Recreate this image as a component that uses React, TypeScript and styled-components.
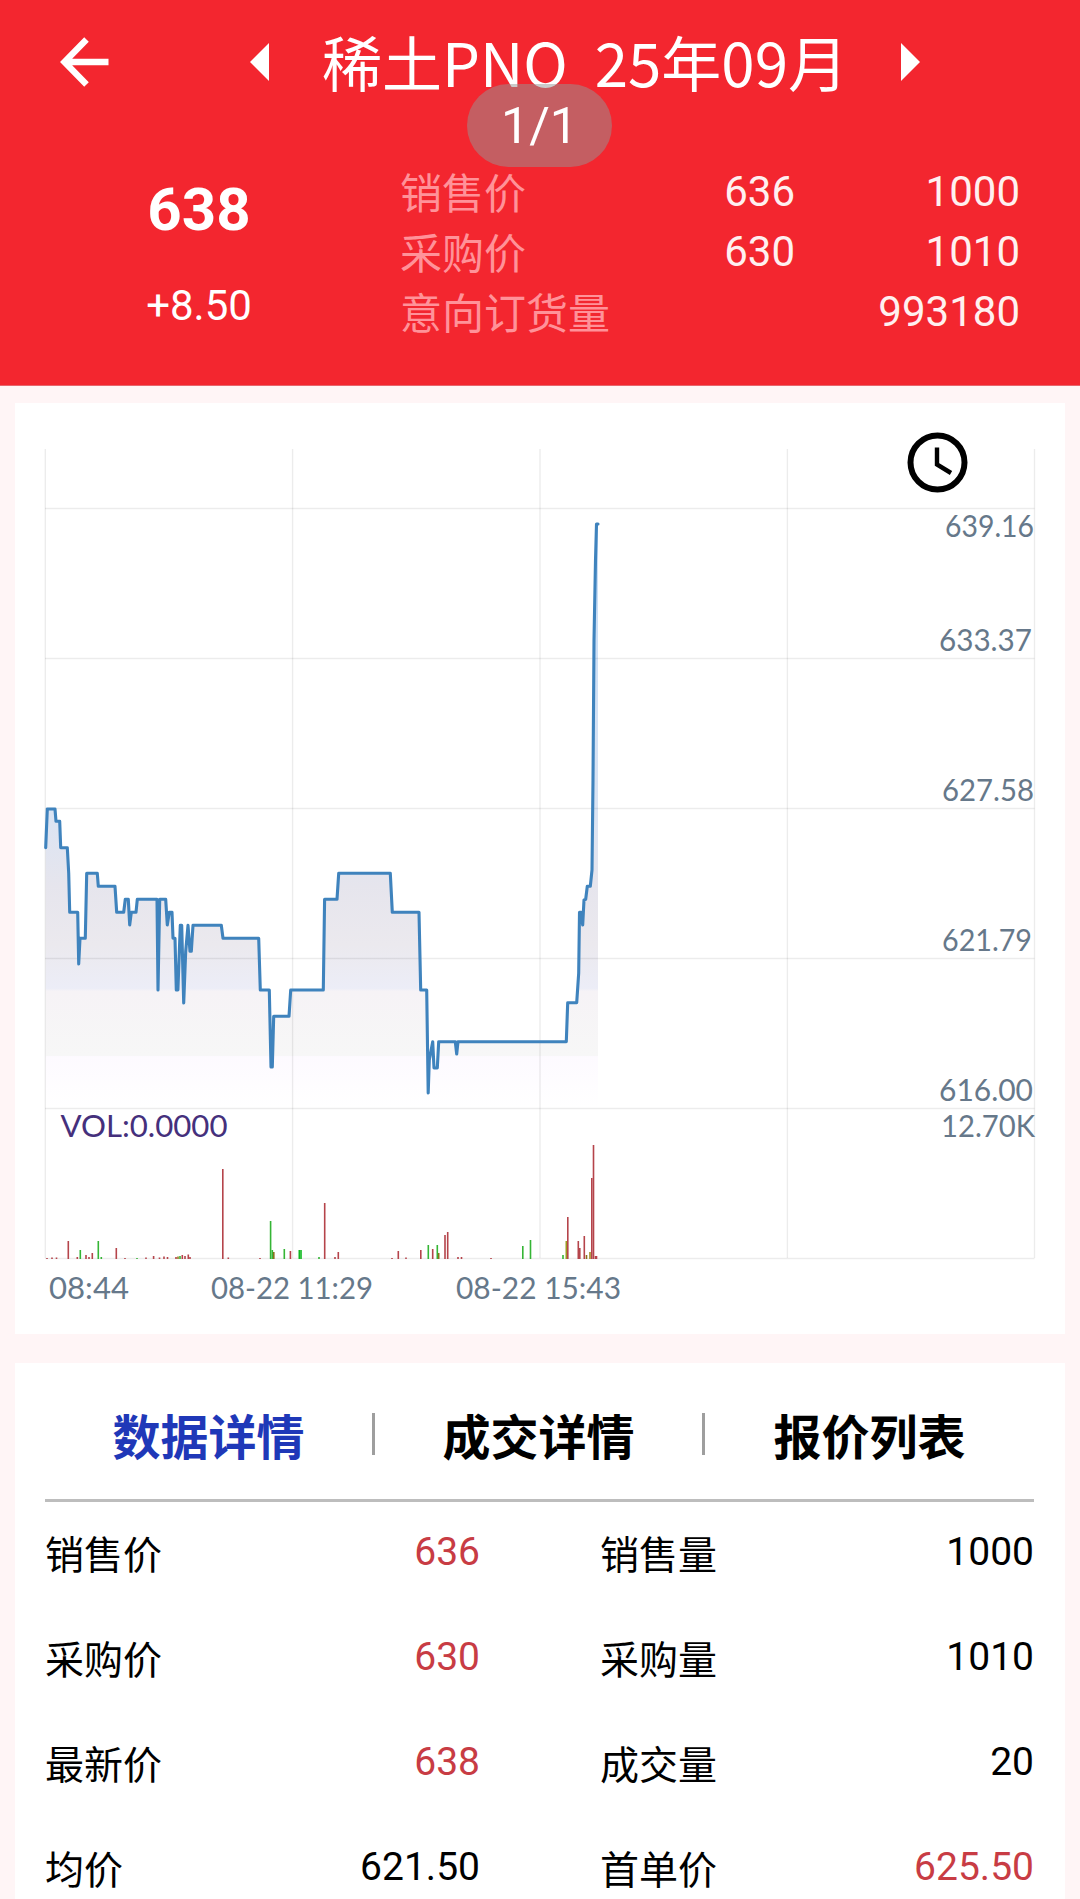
import React from "react";
import styled, { createGlobalStyle } from "styled-components";

const GlobalStyle = createGlobalStyle`
  * { box-sizing: border-box; }
  body { margin: 0; background: #fff5f6; overflow: hidden; }
`;

const Screen = styled.main`
  width: 1080px;
  height: 1899px;
  overflow: hidden;
  background: #fff5f6;
  color: #000;
  font-family: Roboto, "Noto Sans CJK SC", sans-serif;
`;

const Header = styled.header`
  position: relative;
  height: 386px;
  background: #f3262f;
  border-bottom: 1px solid #e8656c;
  color: #fff;
`;

const TitleBar = styled.div`
  height: 158px;
  padding: 18px 160px 0 60px;
  display: grid;
  grid-template-columns: 190px 72px 1fr 19px;
  align-items: start;
`;

const Title = styled.h1`
  margin: 13px 0 0;
  font: 400 60px/60px "Noto Sans CJK SC", sans-serif;
  white-space: pre;
`;

const BackIcon = styled.svg`
  width: 49px;
  height: 50px;
  margin-top: 19px;
  display: block;
`;

const StepIcon = styled.svg`
  width: 19px;
  height: 38px;
  margin-top: 25px;
  display: block;
`;

const PageBadge = styled.div`
  position: absolute;
  left: 467px;
  top: 84px;
  width: 145px;
  height: 83px;
  border-radius: 42px;
  background: rgba(150, 150, 150, 0.5);
  display: flex;
  align-items: center;
  justify-content: center;
  font: 400 50px/46px Roboto, sans-serif;
`;

const Quote = styled.div`
  display: flex;
  padding-right: 60px;
`;

const Latest = styled.div`
  width: 398px;
  display: flex;
  flex-direction: column;
  align-items: center;
`;

const LatestPrice = styled.strong`
  font-size: 60px;
  line-height: 70px;
  margin-top: 17px;
`;

const LatestChange = styled.span`
  font-size: 42px;
  line-height: 50px;
  margin-top: 36px;
`;

const QuoteGrid = styled.div`
  flex: 1;
  display: grid;
  grid-template-columns: 220px 175px 1fr;
  grid-auto-rows: 60px;
  margin: 4px 0 0 2px;
  font-size: 42px;
  line-height: 60px;
`;

const QuoteLabel = styled.span`
  margin-top: -1px;
  color: #ff9299;
  font-family: "Noto Sans CJK SC", sans-serif;
`;

const QuoteValue = styled.span`
  text-align: right;
  color: #fff0f0;
`;

const Card = styled.section<{ $top: number; $height: number }>`
  margin: ${(p) => p.$top}px 15px 0;
  height: ${(p) => p.$height}px;
  background: #fff;
`;

const Chart = styled.svg`
  display: block;
  width: 1050px;
  height: 931px;
  font-family: Lato, sans-serif;
  font-size: 31px;
`;

const Details = styled.div`
  padding: 0 31px 0 30px;
`;

const Tabs = styled.nav`
  height: 139px;
  padding-top: 5px;
  display: grid;
  grid-template-columns: 327px 3px 327px 3px 1fr;
  align-items: center;
  border-bottom: 3px solid #bdbdbd;
`;

const Tab = styled.button<{ $active?: boolean }>`
  border: 0;
  padding: 0;
  background: none;
  color: ${(p) => (p.$active ? "#1f38b8" : "#000")};
  font: 700 48px/70px "Noto Sans CJK SC", sans-serif;
`;

const TabDivider = styled.i`
  width: 3px;
  height: 42px;
  background: #9e9e9e;
`;

const Table = styled.div`
  display: grid;
  grid-template-columns: 435px 434px;
  column-gap: 120px;
  margin-top: -3px;
`;

const Pair = styled.div`
  height: 105px;
  display: flex;
  justify-content: space-between;
  align-items: center;
`;

const PairLabel = styled.span`
  font: 400 39px/58px "Noto Sans CJK SC", sans-serif;
`;

const PairValue = styled.span<{ $red?: boolean }>`
  font-size: 39px;
  line-height: 46px;
  color: ${(p) => (p.$red ? "#c83c44" : "#000")};
`;

const PRICE: number[][] = [
  [45.7, 847.7], [47.3, 809], [55, 809], [56, 821.3], [59.7, 821.3], [60.7, 847.7], [67.3, 847.7], [68.7, 873], [69.7, 912.3],
  [77.7, 912.3], [78.7, 964], [80, 938.3], [85.3, 938.3], [86.7, 873.3], [97.3, 873.3], [98.3, 886.3], [115, 886.3],
  [116.7, 912.3], [123.7, 912.3], [125.3, 899.3], [128.3, 899.3], [129.7, 925], [131.3, 912.3], [136, 912.3],
  [137.3, 899.3], [157, 899.3], [158, 990], [159.7, 899.3], [165.7, 899.3], [167.3, 925], [169.3, 912.3], [172, 912.3],
  [173, 938.3], [175, 938.3], [176.3, 990], [177.9, 990], [180.3, 925.3], [181.7, 925.3], [183.7, 1003], [185.7, 951.3],
  [188, 925.3], [190, 951.3], [191.3, 951.3], [193, 925.3], [221.3, 925.3], [223, 938.3], [258.7, 938.3], [260.3, 990],
  [269.3, 990], [271, 1067], [272.3, 1067], [273.7, 1016.3], [289, 1016.3], [290.7, 990], [323.3, 990], [324.6, 899.3],
  [337, 899.3], [338.7, 873.3], [390.3, 873.3], [392.3, 912.3], [419, 912.3], [420.7, 990], [426.7, 990], [428.2, 1093],
  [429.3, 1060], [432.7, 1041.7], [434, 1068], [437.3, 1068], [438.7, 1041.7], [455.3, 1041.7], [456.7, 1054],
  [458, 1041.7], [566.3, 1041.7], [567.7, 1002.7], [576.7, 1002.7], [578.7, 973], [579.5, 912.3], [581, 912.3],
  [582.7, 925], [584, 900], [585.7, 899.3], [587.3, 886.3], [590.3, 886.3], [592, 870], [593, 780], [594, 640],
  [595.5, 560], [596.5, 524], [598, 524],
];

const UP = "#b5444b";
const DOWN = "#35b535";

const VOLUME: [number, number, string][] = [
  [47, 1, UP], [52, 1.5, UP], [56.5, 1.5, UP], [68.3, 18, UP], [77.3, 2, UP], [80.3, 9, DOWN], [86, 4, UP], [89, 2, UP],
  [92.3, 6, UP], [98.3, 18, DOWN], [101.3, 2, DOWN], [116.3, 11, UP], [125, 1, UP], [137, 1, DOWN], [146, 1.5, UP],
  [153.6, 3, UP], [159.5, 1.5, UP], [164, 2.5, UP], [167.5, 2, UP], [176, 2, UP], [178, 2.5, "#9a7c1c"], [180, 3, DOWN],
  [182.3, 4, UP], [185, 3, UP], [188.3, 4.5, UP], [190, 2, UP], [222.8, 90, UP], [228.3, 1.5, UP], [260, 1, UP],
  [270.6, 38, DOWN], [272.3, 9, DOWN], [273.8, 7, "#8a701c"], [284.3, 10, DOWN], [290.4, 8, UP], [299.3, 9, "#10b820"],
  [301, 9, "#10b820"], [319, 2, DOWN], [324.7, 56, UP], [335, 2, UP], [338.3, 7, UP], [392, 1, UP], [398.3, 8, UP],
  [406, 1.5, UP], [420.8, 9, UP], [428.3, 14, DOWN], [432.7, 10, UP], [437.3, 14, DOWN], [438.7, 6, "#8a701c"],
  [445, 24, UP], [447.7, 27, UP], [458, 2, UP], [461.5, 2, UP], [491, 1, UP], [522.8, 13, DOWN], [530.5, 19, DOWN],
  [563, 4, DOWN], [566.3, 18, "#9a9c20"], [567.8, 42, UP], [578.3, 18, UP], [579.8, 11, UP], [584.3, 23, UP],
  [586.5, 4, "#8a701c"], [590, 7, "#a08a20"], [591.8, 81, UP], [593.5, 114, UP], [595.5, 3, UP], [596.5, 3, UP],
];

const GRID_X = [45.3, 292.6, 540, 787.4, 1034.5];
const GRID_Y = [508.5, 658.5, 808.5, 958.5, 1108.5, 1258.5];

const AXIS: [string, number, number, number][] = [
  ["639.16", 945, 536.5, 89],
  ["633.37", 939, 650.5, 93],
  ["627.58", 942, 800.5, 92],
  ["621.79", 942, 950.5, 90],
  ["616.00", 939, 1100.5, 94],
  ["12.70K", 941, 1136.5, 94],
  ["08:44", 49, 1298.5, 80],
  ["08-22 11:29", 211, 1298.5, 162],
  ["08-22 15:43", 456, 1298.5, 165],
];

const ROWS: [string, string, boolean][] = [
  ["销售价", "636", true], ["销售量", "1000", false],
  ["采购价", "630", true], ["采购量", "1010", false],
  ["最新价", "638", true], ["成交量", "20", false],
  ["均价", "621.50", false], ["首单价", "625.50", true],
];

function PriceChart() {
  const line = PRICE.map((p) => p.join(",")).join(" ");
  return (
    <Chart viewBox="15 403 1050 931">
      <defs>
        <linearGradient id="fill" gradientUnits="userSpaceOnUse" x1="0" y1="524" x2="0" y2="1108">
          <stop offset="0" stopColor="#c4dcf6" />
          <stop offset="0.5" stopColor="#dbe4f3" />
          <stop offset="0.62" stopColor="#e6e5ed" />
          <stop offset="0.72" stopColor="#ebe9ee" />
          <stop offset="0.795" stopColor="#ecedf7" />
          <stop offset="0.8" stopColor="#f6f3f6" />
          <stop offset="0.91" stopColor="#f7f7f7" />
          <stop offset="0.912" stopColor="#fdfaff" />
          <stop offset="1" stopColor="#ffffff" />
        </linearGradient>
      </defs>
      <polygon points={`45.7,1108 ${line} 598,1108`} fill="url(#fill)" />
      <g stroke="#000" strokeOpacity="0.075" strokeWidth="1.4">
        {GRID_X.map((x) => <line key={x} x1={x} x2={x} y1={449} y2={1258} />)}
        {GRID_Y.map((y) => <line key={y} x1={45} x2={1034.5} y1={y} y2={y} />)}
      </g>
      <polyline points={line} fill="none" stroke="#3f83bd" strokeWidth="3.1" strokeLinejoin="round" strokeLinecap="round" />
      {VOLUME.map(([x, h, color]) => (
        <rect key={x} x={x - 0.8} y={1259 - h} width={1.6} height={h} fill={color} />
      ))}
      <text x="60.500" y="1136.500" fill="#45307c" textLength="167" lengthAdjust="spacingAndGlyphs">VOL:0.0000</text>
      {AXIS.map(([text, x, y, w]) => (
        <text key={text} x={x} y={y} fill="#66788a" textLength={w} lengthAdjust="spacingAndGlyphs">{text}</text>
      ))}
      <g fill="none" stroke="#000">
        <circle cx="937.500" cy="462.500" r="27" strokeWidth="6" />
        <path d="M937 447.500V464.500L951 473" strokeWidth="4.400" />
      </g>
    </Chart>
  );
}

export default function App() {
  return (
    <Screen>
      <GlobalStyle />
      <Header>
        <TitleBar>
          <BackIcon viewBox="0 0 49 50" fill="none" stroke="#fff" strokeWidth="6.400">
            <path d="M26.500 2.500L4.500 25L26.500 47.500M4.500 25H48.500" />
          </BackIcon>
          <StepIcon viewBox="0 0 19 38"><path d="M19 0V38L0 19Z" fill="#fff" /></StepIcon>
          <Title>稀土PNO  25年09月</Title>
          <StepIcon viewBox="0 0 19 38"><path d="M0 0V38L19 19Z" fill="#fff" /></StepIcon>
        </TitleBar>
        <PageBadge>1/1</PageBadge>
        <Quote>
          <Latest>
            <LatestPrice>638</LatestPrice>
            <LatestChange>+8.50</LatestChange>
          </Latest>
          <QuoteGrid>
            <QuoteLabel>销售价</QuoteLabel><QuoteValue>636</QuoteValue><QuoteValue>1000</QuoteValue>
            <QuoteLabel>采购价</QuoteLabel><QuoteValue>630</QuoteValue><QuoteValue>1010</QuoteValue>
            <QuoteLabel>意向订货量</QuoteLabel><QuoteValue /><QuoteValue>993180</QuoteValue>
          </QuoteGrid>
        </Quote>
      </Header>
      <Card $top={17} $height={931}>
        <PriceChart />
      </Card>
      <Card $top={29} $height={600}>
        <Details>
          <Tabs>
            <Tab $active>数据详情</Tab>
            <TabDivider />
            <Tab>成交详情</Tab>
            <TabDivider />
            <Tab>报价列表</Tab>
          </Tabs>
          <Table>
            {ROWS.map(([label, value, red]) => (
              <Pair key={label}>
                <PairLabel>{label}</PairLabel>
                <PairValue $red={red}>{value}</PairValue>
              </Pair>
            ))}
          </Table>
        </Details>
      </Card>
    </Screen>
  );
}
